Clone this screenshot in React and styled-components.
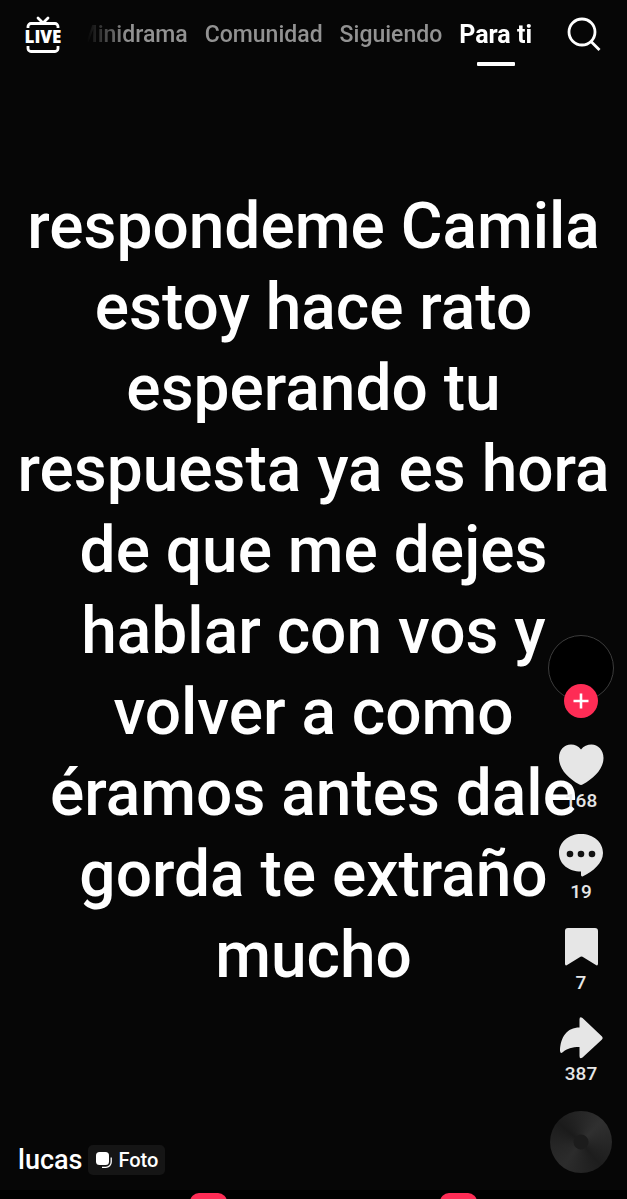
import React, { useState } from "react";
import styled, { createGlobalStyle } from "styled-components";

const tabs = ["Minidrama", "Comunidad", "Siguiendo", "Para ti"];

const lines = [
    "respondeme Camila",
    "estoy hace rato",
    "esperando tu",
    "respuesta ya es hora",
    "de que me dejes",
    "hablar con vos y",
    "volver a como",
    "éramos antes dale",
    "gorda te extraño",
    "mucho",
];

const LiveIcon = () => (
    <svg width="40" height="40" viewBox="0 0 40 40" fill="none" stroke="#fff" strokeWidth="2.8" strokeLinecap="round" strokeLinejoin="round">
        <path d="M15 3l5 5 5-5" />
        <path d="M5 13v-1.500a3 3 0 0 1 3-3h24a3 3 0 0 1 3 3V13" strokeLinecap="butt" />
        <path d="M5 31v2.500a3 3 0 0 0 3 3h24a3 3 0 0 0 3-3V31" strokeLinecap="butt" />
        <text x="20" y="28" textAnchor="middle" fill="#fff" stroke="none" fontFamily="Open Sans, sans-serif" fontSize="17" fontWeight="800">LIVE</text>
    </svg>
);

const SearchIcon = () => (
    <svg width="36" height="36" viewBox="0 0 36 36" fill="none" stroke="#fff" strokeWidth="2.8">
        <circle cx="16" cy="15" r="13" />
        <path d="M25 24.500l8.500 8.500" />
    </svg>
);

const PlusIcon = () => (
    <svg width="16" height="16" viewBox="0 0 16 16" stroke="#fff" strokeWidth="2.600">
        <path d="M8 0.500v15M0.500 8h15" />
    </svg>
);

const HeartIcon = () => (
    <svg width="46" height="46" viewBox="0 0 46 46" fill="#e6e6e6">
        <path d="M23 7.500C20.500 4.300 17 2.500 13 2.500C6 2.500 1 8 1 16C1 27 10 36 21 42.300Q23 43.500 25 42.300C36 36 45.500 27 45.500 16C45.500 8 40 2.500 33.500 2.500C29.500 2.500 25.500 4.300 23 7.500Z" />
    </svg>
);

const CommentIcon = () => (
    <svg width="46" height="46" viewBox="0 0 46 46">
        <path fill="#e6e6e6" d="M23 1C35.500 1 45 9.200 45 20C45 30 35 38.500 25 43.300Q23 44 23 42V38.500C10.500 38.500 1 31 1 20C1 9.200 10.500 1 23 1Z" />
        <g fill="#111">
            <circle cx="12" cy="21" r="3.300" />
            <circle cx="23" cy="21" r="3.300" />
            <circle cx="34" cy="21" r="3.300" />
        </g>
    </svg>
);

const BookmarkIcon = () => (
    <svg width="46" height="46" viewBox="0 0 46 46" fill="#e6e6e6">
        <path d="M10 4H37Q40 4 40 7V39.500Q40 42.500 37.500 40.800L24.500 32.800Q23.500 32.200 22.500 32.800L9.500 40.800Q7 42.500 7 39.500V7Q7 4 10 4Z" />
    </svg>
);

const ShareIcon = () => (
    <svg width="46" height="46" viewBox="0 0 46 46" fill="#e6e6e6">
        <path d="M21.500 4.500Q21.500 1 24.500 3L44 21.500Q45.500 23 44 24.500L24.500 42.500Q21.500 44.500 21.500 41V32C14 32 9 33.500 5 37Q2 39.500 2 35.500C2.500 22 9 12.500 21.500 12.500Z" />
    </svg>
);

const PhotoIcon = () => (
    <svg width="18" height="18" viewBox="0 0 18 18" fill="none">
        <rect x="1" y="1" width="13" height="13" rx="3.500" fill="#fff" />
        <path d="M16.200 6.500V11a5.300 5.300 0 0 1-5.300 5.300H7" stroke="#fff" strokeWidth="1.300" />
    </svg>
);

const actions = [
    { name: "Me gusta", count: 168, icon: <HeartIcon /> },
    { name: "Comentarios", count: 19, icon: <CommentIcon /> },
    { name: "Guardar", count: 7, icon: <BookmarkIcon /> },
    { name: "Compartir", count: 387, icon: <ShareIcon /> },
];

const App = () => {
    const [active, setActive] = useState("Para ti");

    return (
        <Page>
            <GlobalStyle />
            <Header>
                <IconButton aria-label="LIVE"><LiveIcon /></IconButton>
                <Tabs>
                    {tabs.map((tab) => (
                        <Tab key={tab} $active={tab === active} onClick={() => setActive(tab)}>{tab}</Tab>
                    ))}
                </Tabs>
                <IconButton aria-label="Buscar"><SearchIcon /></IconButton>
            </Header>
            <Feed>
                <Caption>
                    {lines.map((line) => <Line key={line}>{line}</Line>)}
                </Caption>
                <Author>
                    <AuthorLink href="#lucas">lucas</AuthorLink>
                    <Badge><PhotoIcon />Foto</Badge>
                </Author>
                <Rail>
                    <Profile>
                        <Avatar href="#lucas" aria-label="lucas" />
                        <Follow aria-label="Seguir"><PlusIcon /></Follow>
                    </Profile>
                    {actions.map((a) => (
                        <Action key={a.name} aria-label={`${a.name} ${a.count}`}>
                            {a.icon}
                            <span>{a.count}</span>
                        </Action>
                    ))}
                    <Disc aria-label="Sonido" />
                </Rail>
            </Feed>
            <BottomBar>
                <Pill />
                <Pill />
            </BottomBar>
        </Page>
    );
};

const GlobalStyle = createGlobalStyle`
    * {
        box-sizing: border-box;
    }
    body {
        margin: 0;
        background: #060606;
        color: #fff;
        font-family: Roboto, "Liberation Sans", sans-serif;
    }
    button {
        padding: 0;
        border: none;
        background: transparent;
        color: inherit;
        font-family: inherit;
        cursor: pointer;
    }
    a {
        color: inherit;
        text-decoration: none;
    }
    svg {
        display: block;
    }
`;

const Page = styled.div`
    display: grid;
    grid-template-rows: auto 1fr auto;
    grid-template-columns: minmax(0, 1fr);
    height: 100vh;
    overflow: hidden;
`;

const Header = styled.header`
    display: flex;
    align-items: center;
    justify-content: space-between;
    gap: 24px;
    height: 70px;
    padding: 0 25px 0 23px;
`;

const IconButton = styled.button`
    flex: none;
`;

const Tabs = styled.nav`
    display: flex;
    flex: 1;
    justify-content: flex-end;
    gap: 17px;
    height: 70px;
    min-width: 0;
    padding-right: 10px;
    overflow: hidden;
    mask-image: linear-gradient(to right, transparent, #000 40px);
`;

const Tab = styled.button`
    display: flex;
    flex: none;
    flex-direction: column;
    align-items: center;
    padding-top: 21px;
    color: ${(props) => (props.$active ? "#fff" : "#929292")};
    font-size: ${(props) => (props.$active ? "25px" : "23px")};
    font-weight: ${(props) => (props.$active ? 700 : 500)};
    line-height: 28px;

    &::after {
        content: "";
        width: 38px;
        height: 4px;
        margin-top: 13px;
        border-radius: 1px;
        background: ${(props) => (props.$active ? "#fff" : "transparent")};
    }
`;

const Feed = styled.main`
    display: grid;
    grid-template-columns: minmax(0, 1fr);
    min-height: 0;
`;

const Caption = styled.p`
    grid-area: 1 / 1;
    margin: 0;
    padding-top: 116px;
    font-size: 64px;
    font-weight: 500;
    line-height: 81px;
    text-align: center;
`;

const Line = styled.span`
    display: block;
    white-space: nowrap;
`;

const Author = styled.div`
    display: flex;
    grid-area: 1 / 1;
    align-items: center;
    align-self: end;
    justify-self: start;
    gap: 6px;
    padding: 0 0 15px 18px;
`;

const AuthorLink = styled.a`
    font-size: 27px;
    font-weight: 500;
    line-height: 30px;
`;

const Badge = styled.span`
    display: flex;
    align-items: center;
    gap: 5px;
    height: 30px;
    padding: 0 7px;
    border-radius: 5px;
    background: #151515;
    font-size: 20px;
    font-weight: 500;
`;

const Rail = styled.aside`
    display: flex;
    grid-area: 1 / 1;
    flex-direction: column;
    align-items: center;
    align-self: end;
    justify-self: end;
    gap: 22px;
    padding: 0 13px 17px 0;
`;

const Profile = styled.div`
    display: flex;
    flex-direction: column;
    align-items: center;
    margin-bottom: 2px;
`;

const Avatar = styled.a`
    width: 66px;
    height: 66px;
    border: 1px solid #3c3c3c;
    border-radius: 50%;
    background: #000;
`;

const Follow = styled.button`
    display: grid;
    place-items: center;
    width: 34px;
    height: 34px;
    margin-top: -17px;
    border-radius: 50%;
    background: #fe2c55;
`;

const Action = styled.button`
    display: flex;
    flex-direction: column;
    align-items: center;
    gap: 3px;
    color: #e6e6e6;
    font-size: 19px;
    font-weight: 500;
    line-height: 20px;
`;

const Disc = styled.button`
    width: 62px;
    height: 62px;
    margin-top: 5px;
    border-radius: 50%;
    background:
        radial-gradient(circle, #1c1c1c 7px, transparent 8px),
        conic-gradient(#262626, #303030 45deg, #252525 100deg, #1d1d1d 140deg, #2c2c2c 215deg, #262626 260deg, #1b1b1b 310deg, #262626);
`;

const BottomBar = styled.footer`
    display: flex;
    justify-content: center;
    gap: 213px;
    height: 9px;
    padding: 3px 0 0 40px;
    overflow: hidden;
    background: #000;
`;

const Pill = styled.span`
    flex: none;
    width: 37px;
    height: 20px;
    border-radius: 9px;
    background: #fe2c55;
`;

export default App;
